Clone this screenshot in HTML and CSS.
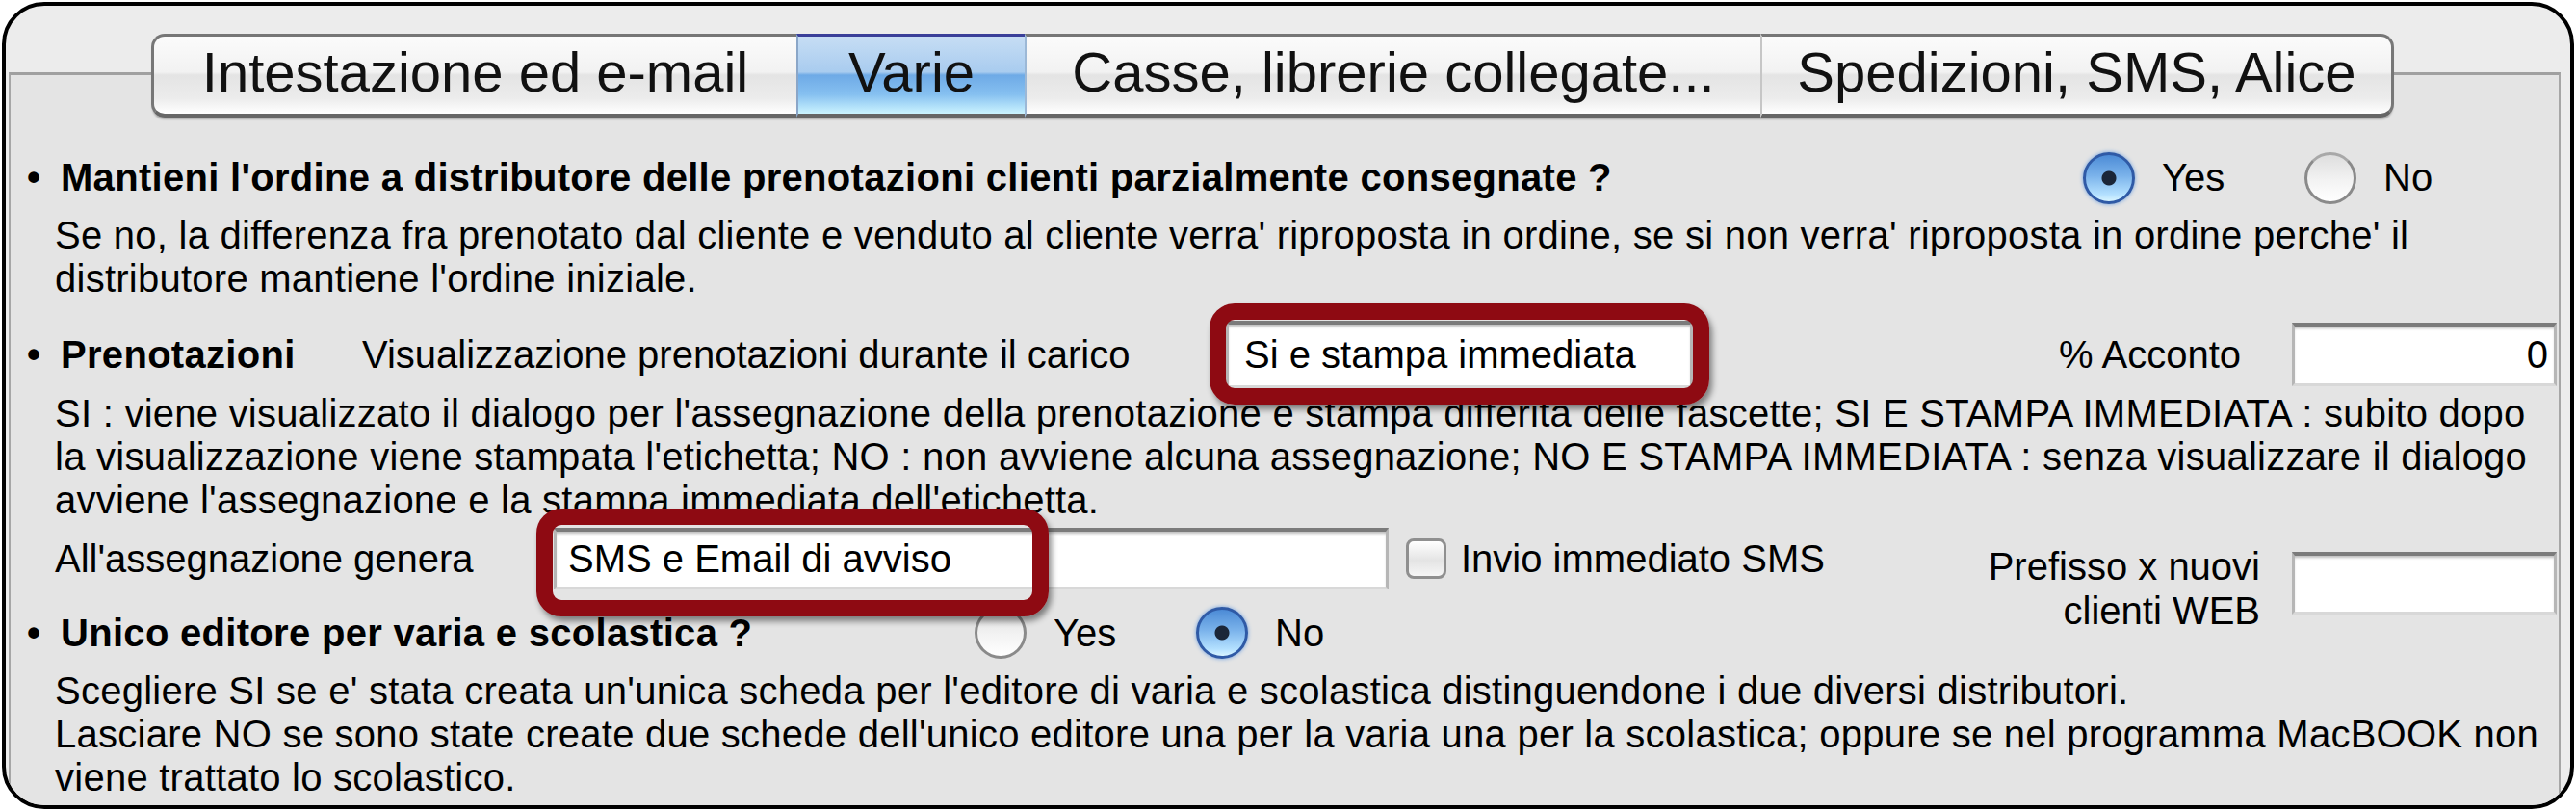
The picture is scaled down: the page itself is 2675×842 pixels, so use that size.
FILE: index.html
```html
<!DOCTYPE html>
<html lang="it">
<head>
<meta charset="utf-8"/>
<meta content="width=device-width, initial-scale=1.0" name="viewport"/>
<title>Preferenze – Varie</title>
<link rel="stylesheet" href="styles.css">
</head>
<body>
<div class="finestra">
<div class="schede">
<nav class="tabs">
<div class="tab tab-primo">Intestazione ed e-mail</div>
<div class="tab tab-attivo">Varie</div>
<div class="tab tab-casse">Casse, librerie collegate...</div>
<div class="tab tab-ultimo">Spedizioni, SMS, Alice</div>
</nav>
<div class="pannello">

<div class="riga riga-ordine">
<span class="punto">•</span><span class="titolo">Mantieni l'ordine a distributore delle prenotazioni clienti parzialmente consegnate ?</span>
<div class="scelta scelta-destra">
<label class="opzione"><span class="radio attivo"></span>Yes</label>
<label class="opzione"><span class="radio"></span>No</label>
</div>
</div>
<p class="nota">Se no, la differenza fra prenotato dal cliente e venduto al cliente verra' riproposta in ordine, se si non verra' riproposta in ordine perche' il<br>distributore mantiene l'ordine iniziale.</p>

<div class="riga riga-prenotazioni">
<span class="punto">•</span><span class="titolo titolo-breve">Prenotazioni</span>
<span class="etichetta-carico">Visualizzazione prenotazioni durante il carico</span>
<span class="segno segno-carico"><input class="campo campo-carico" type="text" value="Si e stampa immediata" readonly></span>
<div class="acconto">
<span>% Acconto</span>
<input class="campo campo-acconto" type="text" value="0" readonly>
</div>
</div>
<p class="nota nota-stretta">SI : viene visualizzato il dialogo per l'assegnazione della prenotazione e stampa differita delle fascette; SI E STAMPA IMMEDIATA : subito dopo<br>la visualizzazione viene stampata l'etichetta; NO : non avviene alcuna assegnazione; NO E STAMPA IMMEDIATA : senza visualizzare il dialogo<br>avviene l'assegnazione e la stampa immediata dell'etichetta.</p>

<div class="blocco">
<div class="colonna">
<div class="riga riga-genera">
<span class="etichetta-genera">All'assegnazione genera</span>
<span class="segno segno-genera"><input class="campo campo-genera" type="text" value="SMS e Email di avviso" readonly></span>
<span class="casella"></span>
<span class="testo-casella">Invio immediato SMS</span>
</div>
<div class="riga riga-editore">
<span class="punto">•</span><span class="titolo titolo-editore">Unico editore per varia e scolastica ?</span>
<div class="scelta">
<label class="opzione"><span class="radio"></span>Yes</label>
<label class="opzione"><span class="radio attivo"></span>No</label>
</div>
</div>
</div>
<div class="prefisso">
<span class="etichetta-prefisso">Prefisso x nuovi<br>clienti WEB</span>
<input class="campo campo-prefisso" type="text" value="" readonly>
</div>
</div>
<p class="nota nota-editore">Scegliere SI se e' stata creata un'unica scheda per l'editore di varia e scolastica distinguendone i due diversi distributori.<br>Lasciare NO se sono state create due schede dell'unico editore una per la varia una per la scolastica; oppure se nel programma MacBOOK non<br>viene trattato lo scolastico.</p>

</div>
</div>
</div>
</body>
</html>
```

FILE: styles.css
```css
body {
  margin: 0;
  background: #fff;
  font-family: "Liberation Sans", Arial, sans-serif;
  color: #000;
}
.finestra {
  box-sizing: border-box;
  margin: 2px;
  height: 838px;
  border: 4px solid #000;
  border-radius: 44px;
  background: #ececec;
  overflow: hidden;
}
.schede {
  margin: 69px 10px 0 3px;
  height: 800px;
  border: 2px solid #a6a6a6;
  border-top: 3px solid #a0a0a0;
  border-bottom: 0;
  background: #e4e4e4;
}

/* linguette */
.tabs {
  display: flex;
  height: 87px;
  margin: -43px 0 0 146px;
  box-shadow: 0 3px 2px -1px rgba(0,0,0,0.25);
  border-radius: 14px;
  width: 2329px;
}
.tab {
  box-sizing: border-box;
  height: 87px;
  padding-bottom: 6px;
  font-size: 58px;
  line-height: 74px;
  text-align: center;
  color: #111;
  white-space: nowrap;
  border-top: 3px solid #767676;
  border-bottom: 4px solid #666;
  border-left: 2px solid #c6c6c6;
  background: linear-gradient(#fbfbfb, #f2f2f2 46%, #e4e4e4 50%, #ececec 80%, #fff);
}
.tab-primo {
  width: 670px;
  border-left: 3px solid #777;
  border-radius: 14px 0 0 14px;
}
.tab-attivo {
  width: 237px;
  border-top-color: #3a3f99;
  border-left-color: #8aa6c8;
  background: linear-gradient(#c6ddf4, #a9ccef 46%, #6eaae6 50%, #86c0f0 75%, #cbf4ff);
}
.tab-casse {
  width: 764px;
  border-left-color: #9cb8d6;
}
.tab-ultimo {
  width: 658px;
  border-right: 3px solid #777;
  border-radius: 0 14px 14px 0;
}

/* contenuto */
.pannello {
  padding: 0 2px 0 17px;
  font-size: 40px;
  line-height: 45px;
}
.riga {
  display: flex;
  align-items: center;
  white-space: nowrap;
}
.punto {
  width: 35px;
  font-weight: bold;
  flex: none;
}
.titolo {
  font-weight: bold;
  letter-spacing: 0.3px;
}
.riga-ordine {
  margin-top: 35px;
  height: 55px;
}
.scelta {
  display: flex;
}
.scelta-destra {
  margin-left: auto;
  width: 492px;
}
.opzione {
  display: flex;
  align-items: center;
  gap: 28px;
  width: 230px;
}
.radio {
  box-sizing: border-box;
  flex: none;
  width: 54px;
  height: 54px;
  border-radius: 50%;
  border: 3px solid #8a8a8a;
  border-top-color: #a8a8a8;
  background: linear-gradient(#dedede, #f3f3f3 55%, #fff);
}
.radio.attivo {
  border-color: #2f5aa6;
  background: radial-gradient(circle, #1b2638 0 7px, transparent 8px), linear-gradient(#4c8bd6, #7bb3eb 45%, #b3e0ff 85%, #d9f5ff);
  box-shadow: 0 0 4px #6a9ee0;
}
.nota {
  margin: 10px 0 0 29px;
  white-space: nowrap;
  letter-spacing: 0.25px;
}
.riga-prenotazioni {
  margin-top: 21px;
  height: 70px;
}
.titolo-breve {
  width: 313px;
  flex: none;
}
.etichetta-carico {
  width: 897px;
  flex: none;
}
.acconto {
  margin-left: auto;
  display: flex;
  align-items: center;
  gap: 53px;
}
.nota-stretta {
  margin-top: 4px;
}

/* campi di testo */
.campo {
  box-sizing: border-box;
  margin: 0;
  padding: 0 16px;
  font: 40px "Liberation Sans", Arial, sans-serif;
  color: #000;
  background: #fff;
  border: 3px solid #b6b6b6;
  border-top: 4px solid #7b7b7b;
  border-bottom-color: #d8d8d8;
  box-shadow: inset 0 3px 3px -1px #bdbdbd;
  outline: none;
}
.campo-carico {
  width: 485px;
  height: 70px;
}
.campo-acconto {
  width: 275px;
  height: 66px;
  text-align: right;
  padding-right: 6px;
}
.campo-genera {
  width: 867px;
  height: 64px;
  padding-left: 12px;
}
.campo-prefisso {
  width: 275px;
  height: 65px;
  margin-top: 25px;
}

/* riquadri rossi di evidenza */
.segno {
  position: relative;
  z-index: 2;
  display: block;
  flex: none;
}
.segno::after {
  content: "";
  position: absolute;
  box-sizing: border-box;
  border: 17px solid #8e0a12;
  border-radius: 26px;
  box-shadow: 3px 5px 6px rgba(0,0,0,0.45);
  pointer-events: none;
}
.segno-carico::after {
  left: -17px;
  top: -18px;
  width: 519px;
  height: 105px;
}
.segno-genera::after {
  left: -18px;
  top: -20px;
  width: 532px;
  height: 112px;
}

.blocco {
  display: flex;
  margin-top: 6px;
}
.colonna {
  flex: none;
}
.riga-genera {
  height: 64px;
}
.etichetta-genera {
  margin-left: 29px;
  width: 518px;
  flex: none;
}
.casella {
  box-sizing: border-box;
  width: 42px;
  height: 42px;
  margin-left: 18px;
  border: 3px solid #8f8f8f;
  border-radius: 8px;
  background: linear-gradient(#fff, #e4e4e4 55%, #f6f6f6);
}
.testo-casella {
  margin-left: 15px;
}
.riga-editore {
  margin-top: 18px;
  height: 54px;
}
.titolo-editore {
  width: 949px;
  flex: none;
}
.prefisso {
  margin-left: auto;
  display: flex;
  align-items: flex-start;
  gap: 33px;
}
.etichetta-prefisso {
  margin-top: 17px;
  text-align: right;
  line-height: 46px;
  white-space: nowrap;
}
.nota-editore {
  margin-top: 11px;
}
```
